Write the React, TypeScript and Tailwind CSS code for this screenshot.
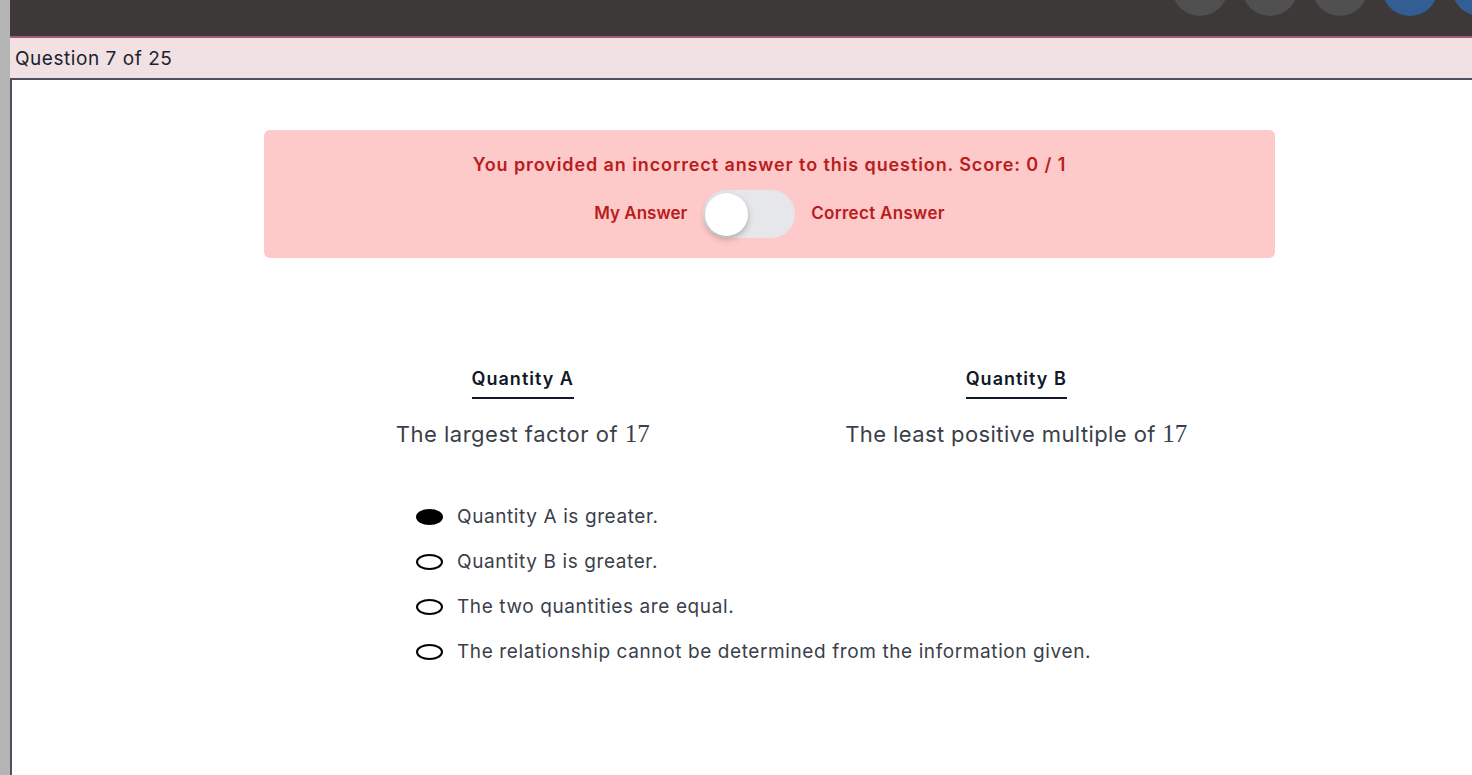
import React, { useState } from 'react';

const options = [
  'Quantity A is greater.',
  'Quantity B is greater.',
  'The two quantities are equal.',
  'The relationship cannot be determined from the information given.',
];

const font = { fontFamily: 'Inter, "Noto Sans", sans-serif' };

function Num({ children }: { children: React.ReactNode }) {
  return <span className="font-['Liberation_Serif',serif] text-[25px] tracking-normal">{children}</span>;
}

export default function App() {
  const [showCorrect, setShowCorrect] = useState(false);
  const selected = 0;

  return (
    <div className="flex h-[775px] w-[1472px] overflow-hidden bg-[#b4b4b4]" style={font}>
      <div className="w-[10px] shrink-0" />
      <div className="flex flex-1 flex-col">
        {/* top bar */}
        <div className="flex h-[36px] justify-end gap-[14px] overflow-hidden bg-[#3d3938]">
          {['#505050', '#505050', '#505050', '#335e93', '#335e93'].map((c, i) => (
            <div
              key={i}
              className="-mt-[40px] h-[56px] w-[56px] shrink-0 rounded-full"
              style={{ backgroundColor: c, marginRight: i === 4 ? -36 : 0 }}
            />
          ))}
        </div>
        <div className="h-[2px] bg-[#a55b7c]" />
        <div className="flex h-[42px] items-center border-b-2 border-[#4b5162] bg-[#f1e1e3] pl-[5px] pt-[2px] text-[19px] tracking-[0.55px] text-[#1c2230]">
          Question 7 of 25
        </div>

        {/* content */}
        <div className="flex-1 border-l-2 border-[#4b5162] bg-white">
          <div className="ml-[252px] mt-[50px] w-[1011px]">
            <div className="flex flex-col items-center rounded-md bg-[#fec9c9] pb-[20px] pt-[24px] text-[#b91c1c]">
              <p className="text-[18px] font-semibold leading-[22px] tracking-[0.9px]">
                You provided an incorrect answer to this question. Score: 0 / 1
              </p>
              <div className="mt-[14px] flex items-center gap-[16px] text-[17px] font-semibold">
                <span>My Answer</span>
                <button
                  onClick={() => setShowCorrect(!showCorrect)}
                  className="flex h-[48px] w-[92px] items-center rounded-full bg-[#e5e7eb] px-[2px]"
                >
                  <span
                    className={`h-[43px] w-[43px] rounded-full bg-white shadow-[0_3px_6px_rgba(0,0,0,0.25)] ${showCorrect ? 'ml-auto' : ''}`}
                  />
                </button>
                <span className="tracking-[0.3px]">Correct Answer</span>
              </div>
            </div>

            <div className="mt-[110px] grid grid-cols-2 px-[12px]">
              {[
                ['Quantity A', 'The largest factor of', 'tracking-[0.5px]'],
                ['Quantity B', 'The least positive multiple of', 'tracking-[0.4px]'],
              ].map(([h, t, tr]) => (
                <div key={h} className="flex flex-col items-center">
                  <div className="border-b-2 border-[#111827] pb-[7px] text-[18px] font-semibold leading-[22px] tracking-[1px] text-[#111827]">
                    {h}
                  </div>
                  <div className={`mt-[20px] text-[22px] leading-[30px] text-[#3a3f4b] ${tr}`}>
                    {t} <Num>17</Num>
                  </div>
                </div>
              ))}
            </div>

            <div className="ml-[152px] mt-[55px] flex flex-col gap-[19px]">
              {options.map((o, i) => (
                <label key={o} className="flex h-[26px] items-center text-[19px] tracking-[0.6px] text-[#3a3f4b]">
                  <span
                    className={`mr-[14px] h-[16px] w-[27px] rounded-[50%] border-2 border-black ${i === selected ? 'bg-black' : 'bg-white'}`}
                  />
                  {o}
                </label>
              ))}
            </div>
          </div>
        </div>
      </div>
    </div>
  );
}
